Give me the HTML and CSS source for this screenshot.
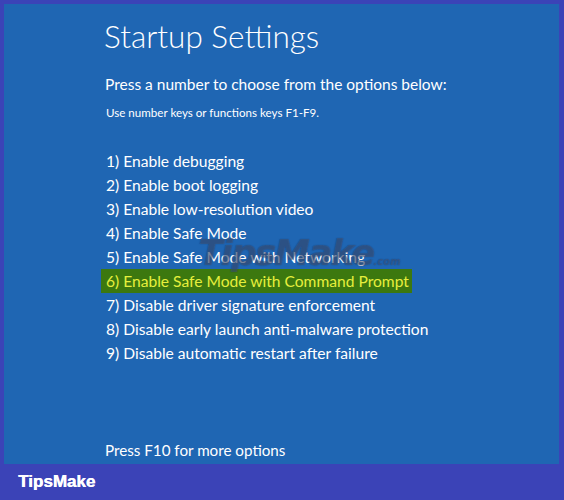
FILE: index.html
```html
<!DOCTYPE html>
<html lang="en">
<head>
  <meta charset="UTF-8">
  <title>Startup Settings</title>
  <link rel="stylesheet" href="styles.css">
</head>
<body>
  <div class="screen">
    <h1 class="title">Startup Settings</h1>
    <p class="lead">Press a number to choose from the options below:</p>
    <p class="hint">Use number keys or functions keys F1-F9.</p>

    <ul class="options">
      <li>1) Enable debugging</li>
      <li>2) Enable boot logging</li>
      <li>3) Enable low-resolution video</li>
      <li>4) Enable Safe Mode</li>
      <li>5) Enable Safe Mode with Networking</li>
      <li class="selected">6) Enable Safe Mode with Command Prompt</li>
      <li>7) Disable driver signature enforcement</li>
      <li>8) Disable early launch anti-malware protection</li>
      <li>9) Disable automatic restart after failure</li>
    </ul>

    <p class="more">Press F10 for more options</p>

    <!-- faint watermark over the list -->
    <div class="watermark">TipsMake<span>.com</span></div>
  </div>
  <div class="footer">TipsMake</div>
</body>
</html>
```

FILE: styles.css
```css
body {
  margin: 0;
  padding: 0;
  width: 564px;
  height: 500px;
  overflow: hidden;
  background-color: #3b43b7;
  font-family: Lato, "Noto Sans", sans-serif;
  color: #fff;
}

.screen {
  position: relative;
  height: 460px;
  margin: 4px 5px 0 4px;
  padding-left: 100px;
  box-sizing: border-box;
  background-color: #1f66b3;
  display: flex;
  flex-direction: column;
}

.title {
  margin: 12px 0 0 0;
  font-size: 31.5px;
  font-weight: 300;
  line-height: 40px;
}

.lead {
  margin: 18px 0 0 1px;
  font-size: 15.5px;
  line-height: 20px;
}

.hint {
  margin: 12px 0 0 2px;
  font-size: 11.6px;
  line-height: 14px;
}

.options {
  list-style: none;
  margin: 29px 0 0 0;
  padding: 0;
}

.options li {
  font-size: 15.6px;
  line-height: 24px;
  padding-left: 2px;
}

.options li.selected {
  display: inline-block;
  margin-left: -3px;
  padding: 0 3px 0 5px;
  background-color: #3c780f;
  color: #e6ef3d;
}

.more {
  margin: auto 0 4px 1px;
  font-size: 15.2px;
  line-height: 20px;
}

.watermark {
  position: absolute;
  left: 194px;
  top: 228px;
  font-family: "DejaVu Sans", sans-serif;
  font-size: 36px;
  font-weight: bold;
  font-style: italic;
  letter-spacing: -2px;
  color: rgba(190, 205, 230, 0.16);
  text-shadow: 0 0 1px rgba(10, 30, 70, 0.6);
}

.watermark span {
  font-size: 10px;
  letter-spacing: 0;
}

.footer {
  height: 36px;
  padding-left: 18px;
  font-family: "Liberation Sans", Arial, sans-serif;
  font-size: 17px;
  font-weight: bold;
  line-height: 36px;
  text-shadow: 0.5px 0 0 #fff;
}
```
